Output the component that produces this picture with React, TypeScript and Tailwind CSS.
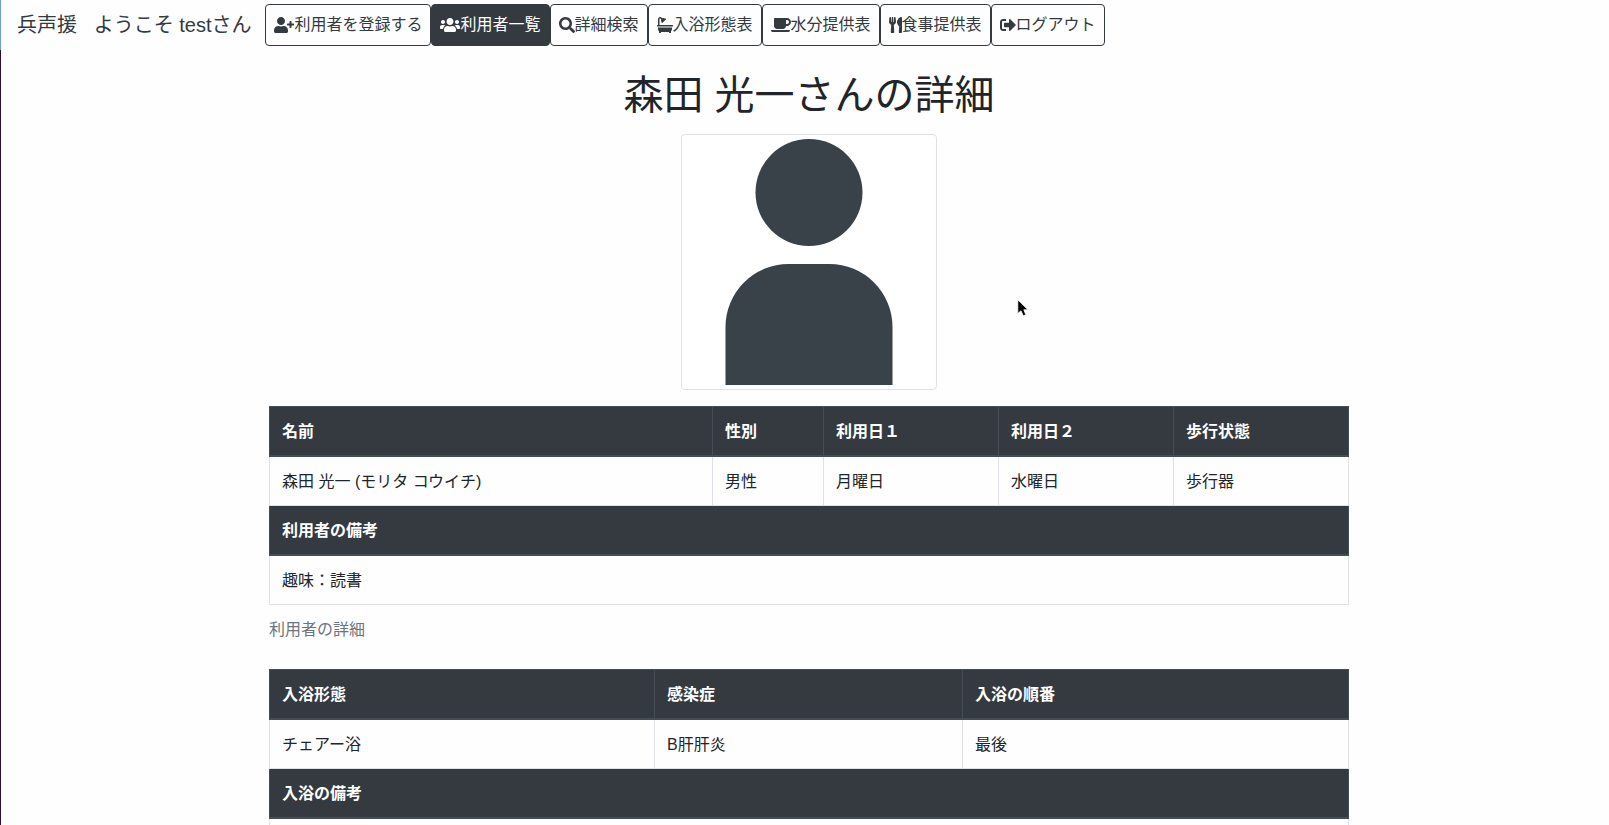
import type { ReactNode } from "react";
import type { IconType } from "react-icons";
import {
  FaBath,
  FaCoffee,
  FaSearch,
  FaSignOutAlt,
  FaUserPlus,
  FaUsers,
  FaUtensils,
} from "react-icons/fa";

type NavItem = { label: string; icon: IconType; iconClass: string; active?: boolean };

const navItems: NavItem[] = [
  { label: "利用者を登録する", icon: FaUserPlus, iconClass: "h-4 w-5" },
  { label: "利用者一覧", icon: FaUsers, iconClass: "h-4 w-5", active: true },
  { label: "詳細検索", icon: FaSearch, iconClass: "h-4 w-4" },
  { label: "入浴形態表", icon: FaBath, iconClass: "h-4 w-4" },
  { label: "水分提供表", icon: FaCoffee, iconClass: "h-4 w-5" },
  { label: "食事提供表", icon: FaUtensils, iconClass: "h-4 w-[13px]" },
  { label: "ログアウト", icon: FaSignOutAlt, iconClass: "h-4 w-4" },
];

function NavButton({ label, icon: Icon, iconClass, active }: NavItem) {
  return (
    <a
      href="#"
      aria-current={active ? "page" : undefined}
      className={
        active
          ? "flex items-center whitespace-nowrap rounded border border-[#343a40] bg-[#343a40] p-2 text-white"
          : "flex items-center whitespace-nowrap rounded border border-[#343a40] p-2 text-[#343a40]"
      }
    >
      <Icon className={`${iconClass} shrink-0`} />
      {label}
    </a>
  );
}

function Th({ children, colSpan }: { children: ReactNode; colSpan?: number }) {
  return (
    <th
      colSpan={colSpan}
      className="border border-b-2 border-[#454d55] bg-[#343a40] px-3 pb-[11px] pt-[13px] text-left align-bottom font-bold text-white"
    >
      {children}
    </th>
  );
}

function Td({ children, colSpan }: { children: ReactNode; colSpan?: number }) {
  return (
    <td colSpan={colSpan} className="border border-[#dee2e6] px-3 pb-[11px] pt-[13px] align-top">
      {children}
    </td>
  );
}

type DetailTableProps = {
  columns: { label: string; value: string; width: string }[];
  noteLabel: string;
  note: string;
  caption?: string;
};

function DetailTable({ columns, noteLabel, note, caption }: DetailTableProps) {
  return (
    <table className="mb-4 w-full table-fixed border-collapse border border-[#dee2e6]">
      {caption && (
        <caption className="caption-bottom pb-[11px] pt-[13px] text-left text-[#6c757d]">
          {caption}
        </caption>
      )}
      <colgroup>
        {columns.map((c) => (
          <col key={c.label} className={c.width} />
        ))}
      </colgroup>
      <thead>
        <tr>
          {columns.map((c) => (
            <Th key={c.label}>{c.label}</Th>
          ))}
        </tr>
      </thead>
      <tbody>
        <tr>
          {columns.map((c) => (
            <Td key={c.label}>{c.value}</Td>
          ))}
        </tr>
        <tr>
          <Th colSpan={columns.length}>{noteLabel}</Th>
        </tr>
        <tr>
          <Td colSpan={columns.length}>{note}</Td>
        </tr>
      </tbody>
    </table>
  );
}

function Avatar() {
  return (
    <div className="mx-auto mb-4 w-64 rounded border border-[#dee2e6] bg-white p-1">
      <svg viewBox="0 0 246 246" className="block w-full" role="img" aria-label="森田 光一">
        <circle cx="123" cy="53.5" r="53.5" fill="#384248" />
        <path d="M39.5 246V188A63 63 0 0 1 102.5 125H143.5A63 63 0 0 1 206.5 188V246Z" fill="#384248" />
      </svg>
    </div>
  );
}

function Pointer() {
  return (
    <svg
      viewBox="0 0 12 18"
      className="pointer-events-none absolute left-[1017px] top-[299px] h-[18px] w-3"
      aria-hidden="true"
    >
      <path
        d="M0.8 0.8V14.5L4 11.8L6.2 16.8L8.8 15.8L6.8 10.8H11Z"
        fill="#000"
        stroke="#fff"
        strokeWidth="0.8"
      />
    </svg>
  );
}

export default function App() {
  return (
    <div className="relative flex h-screen overflow-hidden bg-[#fefefe] font-['Liberation_Sans','Noto_Sans_CJK_JP',sans-serif] text-base text-[#212529]">
      <div className="flex w-px shrink-0 flex-col">
        <div className="h-[50px] bg-[#6f9fd0]" />
        <div className="grow bg-[#2d0f2f]" />
      </div>
      <div className="min-w-0 grow overflow-y-auto [scrollbar-width:none]">
        <nav className="flex items-center px-4 py-1">
          <a href="#" className="mr-[14px] whitespace-nowrap text-xl text-[#343a40]">
            兵声援{"\u00a0\u00a0\u00a0"}ようこそ testさん
          </a>
          <div className="flex">
            {navItems.map((item) => (
              <NavButton key={item.label} {...item} />
            ))}
          </div>
        </nav>
        <main className="pl-2">
          <div className="mx-auto max-w-[1080px] pt-[21px]">
            <h1 className="mb-[15px] text-center text-[40px] leading-12">森田 光一さんの詳細</h1>
            <Avatar />
            <DetailTable
              columns={[
                { label: "名前", value: "森田 光一 (モリタ コウイチ)", width: "w-auto" },
                { label: "性別", value: "男性", width: "w-[111px]" },
                { label: "利用日１", value: "月曜日", width: "w-[175px]" },
                { label: "利用日２", value: "水曜日", width: "w-[175px]" },
                { label: "歩行状態", value: "歩行器", width: "w-[175px]" },
              ]}
              noteLabel="利用者の備考"
              note="趣味：読書"
              caption="利用者の詳細"
            />
            <DetailTable
              columns={[
                { label: "入浴形態", value: "チェアー浴", width: "w-[385px]" },
                { label: "感染症", value: "B肝肝炎", width: "w-[308px]" },
                { label: "入浴の順番", value: "最後", width: "w-auto" },
              ]}
              noteLabel="入浴の備考"
              note={"\u00a0"}
            />
          </div>
        </main>
      </div>
      <Pointer />
    </div>
  );
}
